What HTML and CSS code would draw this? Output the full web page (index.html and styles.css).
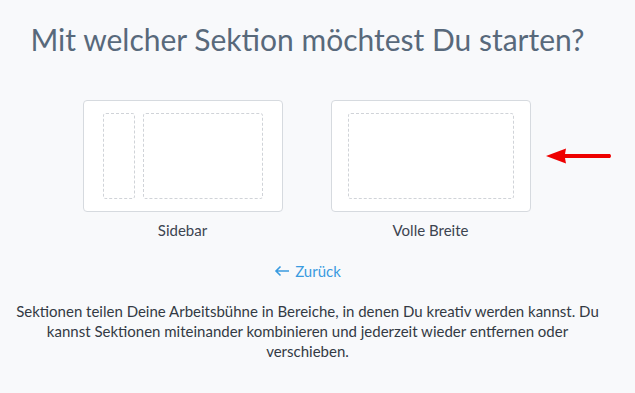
FILE: index.html
```html
<!DOCTYPE html>
<html lang="de">
<head>
    <meta charset="UTF-8">
    <meta name="viewport" content="width=device-width, initial-scale=1.0">
    <title>Sektion wählen</title>
    <link rel="stylesheet" href="styles.css">
</head>
<body>
    <div class="page">
        <h1 class="title">Mit welcher Sektion möchtest Du starten?</h1>

        <!-- Layout choices -->
        <div class="choices">
            <div class="choice">
                <div class="card card-sidebar">
                    <div class="slot slot-side"></div>
                    <div class="slot slot-main"></div>
                </div>
                <div class="choice-label">Sidebar</div>
            </div>
            <div class="choice">
                <div class="card card-full">
                    <div class="slot slot-main"></div>
                </div>
                <div class="choice-label">Volle Breite</div>
                <svg class="pointer" width="66" height="16" viewBox="0 0 66 16">
                    <path d="M0 8 L20 0.5 L19 6 L64 6 Q66 8 64 10 L19 10 L20 15.5 Z" fill="#ee0000"/>
                </svg>
            </div>
        </div>

        <a class="back" href="#">
            <svg class="back-icon" width="16" height="12" viewBox="0 0 16 12">
                <path d="M15 6 H2 M6.5 1.5 L2 6 L6.5 10.5" fill="none" stroke="#3a9be0" stroke-width="1.6"/>
            </svg>
            Zurück
        </a>

        <p class="info">Sektionen teilen Deine Arbeitsbühne in Bereiche, in denen Du kreativ werden kannst. Du kannst Sektionen miteinander kombinieren und jederzeit wieder entfernen oder verschieben.</p>
    </div>
</body>
</html>
```

FILE: styles.css
```css
body {
    margin: 0;
    font-family: Lato, "Open Sans", sans-serif;
    background: #f8f9fb;
    color: #3c4450;
}

.page {
    width: 615px;
    display: flex;
    flex-direction: column;
    align-items: center;
}

.title {
    margin: 21px 0 0;
    font-size: 30px;
    font-weight: 400;
    color: #58697b;
}

/* Layout choices */
.choices {
    display: flex;
    gap: 48px;
    margin: 43px 2px 0 0;
}

.choice {
    position: relative;
    display: flex;
    flex-direction: column;
    align-items: center;
}

.card {
    width: 200px;
    height: 112px;
    box-sizing: border-box;
    background: #fff;
    border: 1px solid #d6dadf;
    border-radius: 4px;
    display: flex;
    gap: 8px;
}

.card-sidebar {
    padding: 12px 19px;
}

.card-full {
    padding: 12px 16px;
}

.slot {
    border: 1px dashed #d0d3d8;
    border-radius: 3px;
}

.slot-side {
    width: 30px;
}

.slot-main {
    flex: 1;
}

.choice-label {
    margin-top: 9px;
    font-size: 15px;
    color: #3c4450;
}

.pointer {
    position: absolute;
    left: 215px;
    top: 48px;
}

.back {
    display: flex;
    align-items: center;
    gap: 5px;
    margin-top: 23px;
    font-size: 15px;
    color: #3a9be0;
    text-decoration: none;
}

.info {
    margin: 21px 0 0;
    padding: 0 7px;
    font-size: 15px;
    line-height: 20px;
    text-align: center;
    color: #333a44;
}
```
